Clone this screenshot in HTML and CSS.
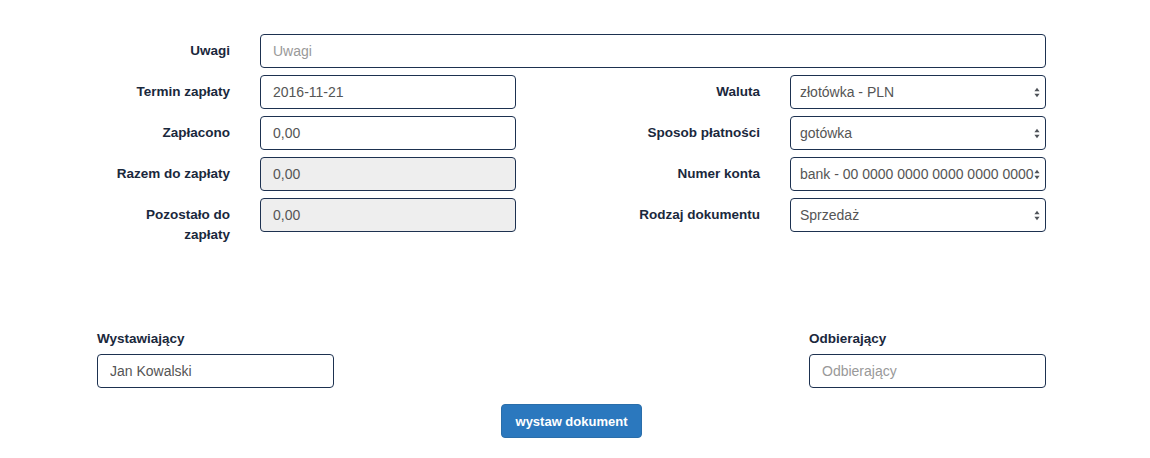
FILE: index.html
```html
<!DOCTYPE html>
<html lang="pl">
<head>
<meta charset="utf-8">
<title>Dokument</title>
<link rel="stylesheet" href="styles.css">
</head>
<body>
<div class="page">
  <form class="form-grid">
    <label class="lbl">Uwagi</label>
    <input class="ctl wide" type="text" placeholder="Uwagi">

    <label class="lbl">Termin zapłaty</label>
    <input class="ctl" type="text" value="2016-11-21">
    <label class="lbl">Waluta</label>
    <span class="sel-wrap">
      <select class="ctl sel"><option>złotówka - PLN</option></select>
      <svg class="arrows" width="6" height="11" viewBox="0 0 6 11"><path d="M3 0.8 L5.6 4.3 H0.4 Z M3 10.2 L5.6 6.7 H0.4 Z" fill="#4f5359"/></svg>
    </span>

    <label class="lbl">Zapłacono</label>
    <input class="ctl" type="text" value="0,00">
    <label class="lbl">Sposob płatności</label>
    <span class="sel-wrap">
      <select class="ctl sel"><option>gotówka</option></select>
      <svg class="arrows" width="6" height="11" viewBox="0 0 6 11"><path d="M3 0.8 L5.6 4.3 H0.4 Z M3 10.2 L5.6 6.7 H0.4 Z" fill="#4f5359"/></svg>
    </span>

    <label class="lbl">Razem do zapłaty</label>
    <input class="ctl ro" type="text" value="0,00" readonly>
    <label class="lbl">Numer konta</label>
    <span class="sel-wrap">
      <select class="ctl sel"><option>bank - 00 0000 0000 0000 0000 0000</option></select>
      <svg class="arrows" width="6" height="11" viewBox="0 0 6 11"><path d="M3 0.8 L5.6 4.3 H0.4 Z M3 10.2 L5.6 6.7 H0.4 Z" fill="#4f5359"/></svg>
    </span>

    <label class="lbl">Pozostało do zapłaty</label>
    <input class="ctl ro" type="text" value="0,00" readonly>
    <label class="lbl">Rodzaj dokumentu</label>
    <span class="sel-wrap">
      <select class="ctl sel"><option>Sprzedaż</option></select>
      <svg class="arrows" width="6" height="11" viewBox="0 0 6 11"><path d="M3 0.8 L5.6 4.3 H0.4 Z M3 10.2 L5.6 6.7 H0.4 Z" fill="#4f5359"/></svg>
    </span>
  </form>

  <div class="people">
    <div class="person">
      <label class="top-lbl">Wystawiający</label>
      <input class="ctl" type="text" value="Jan Kowalski">
    </div>
    <div class="person">
      <label class="top-lbl">Odbierający</label>
      <input class="ctl" type="text" placeholder="Odbierający">
    </div>
  </div>

  <div class="actions">
    <button class="btn" type="button">wystaw dokument</button>
  </div>
</div>
</body>
</html>
```

FILE: styles.css
```css
* { box-sizing: border-box; }

html, body {
  margin: 0;
  padding: 0;
  background: #fff;
}

body {
  font-family: "Liberation Sans", Arial, Helvetica, sans-serif;
  font-size: 14px;
  color: #1c2b40;
}

.page {
  width: 1150px;
  padding: 34px 104px 0 97px;
}

.form-grid {
  display: grid;
  grid-template-columns: 133px 256px 214px 256px;
  column-gap: 30px;
  row-gap: 7px;
  margin: 0;
}

.lbl {
  text-align: right;
  font-weight: bold;
  font-size: 13.5px;
  line-height: 20px;
  padding: 7px 0 0 12px;
  color: #1a283c;
}

.ctl {
  display: block;
  width: 100%;
  height: 34px;
  margin: 0;
  padding: 6px 12px;
  font-family: "Liberation Sans", Arial, Helvetica, sans-serif;
  font-size: 14px;
  line-height: 20px;
  color: #555;
  background: #fff;
  border: 1px solid #1d3150;
  border-radius: 4px;
  outline: none;
}

.ctl::placeholder {
  color: #999;
}

.wide {
  grid-column: 2 / 5;
}

.ro {
  background: #eee;
}

.sel-wrap {
  position: relative;
  display: block;
}

.sel {
  appearance: none;
  -webkit-appearance: none;
  padding: 6px 8px 6px 9px;
  color: #555;
}

.arrows {
  position: absolute;
  right: 6px;
  top: 12px;
  pointer-events: none;
}

.people {
  display: flex;
  justify-content: space-between;
  margin-top: 84px;
}

.person {
  width: 237px;
  display: flex;
  flex-direction: column;
}

.top-lbl {
  font-weight: bold;
  font-size: 13.5px;
  line-height: 20px;
  margin-bottom: 5px;
  color: #1a283c;
}

.actions {
  display: flex;
  justify-content: center;
  margin-top: 16px;
}

.btn {
  height: 34px;
  padding: 0 14px;
  font-family: "Liberation Sans", Arial, Helvetica, sans-serif;
  font-size: 13px;
  font-weight: bold;
  color: #fff;
  background: #2b78be;
  border: 1px solid #2a6eaa;
  border-radius: 4px;
  cursor: pointer;
}
```
